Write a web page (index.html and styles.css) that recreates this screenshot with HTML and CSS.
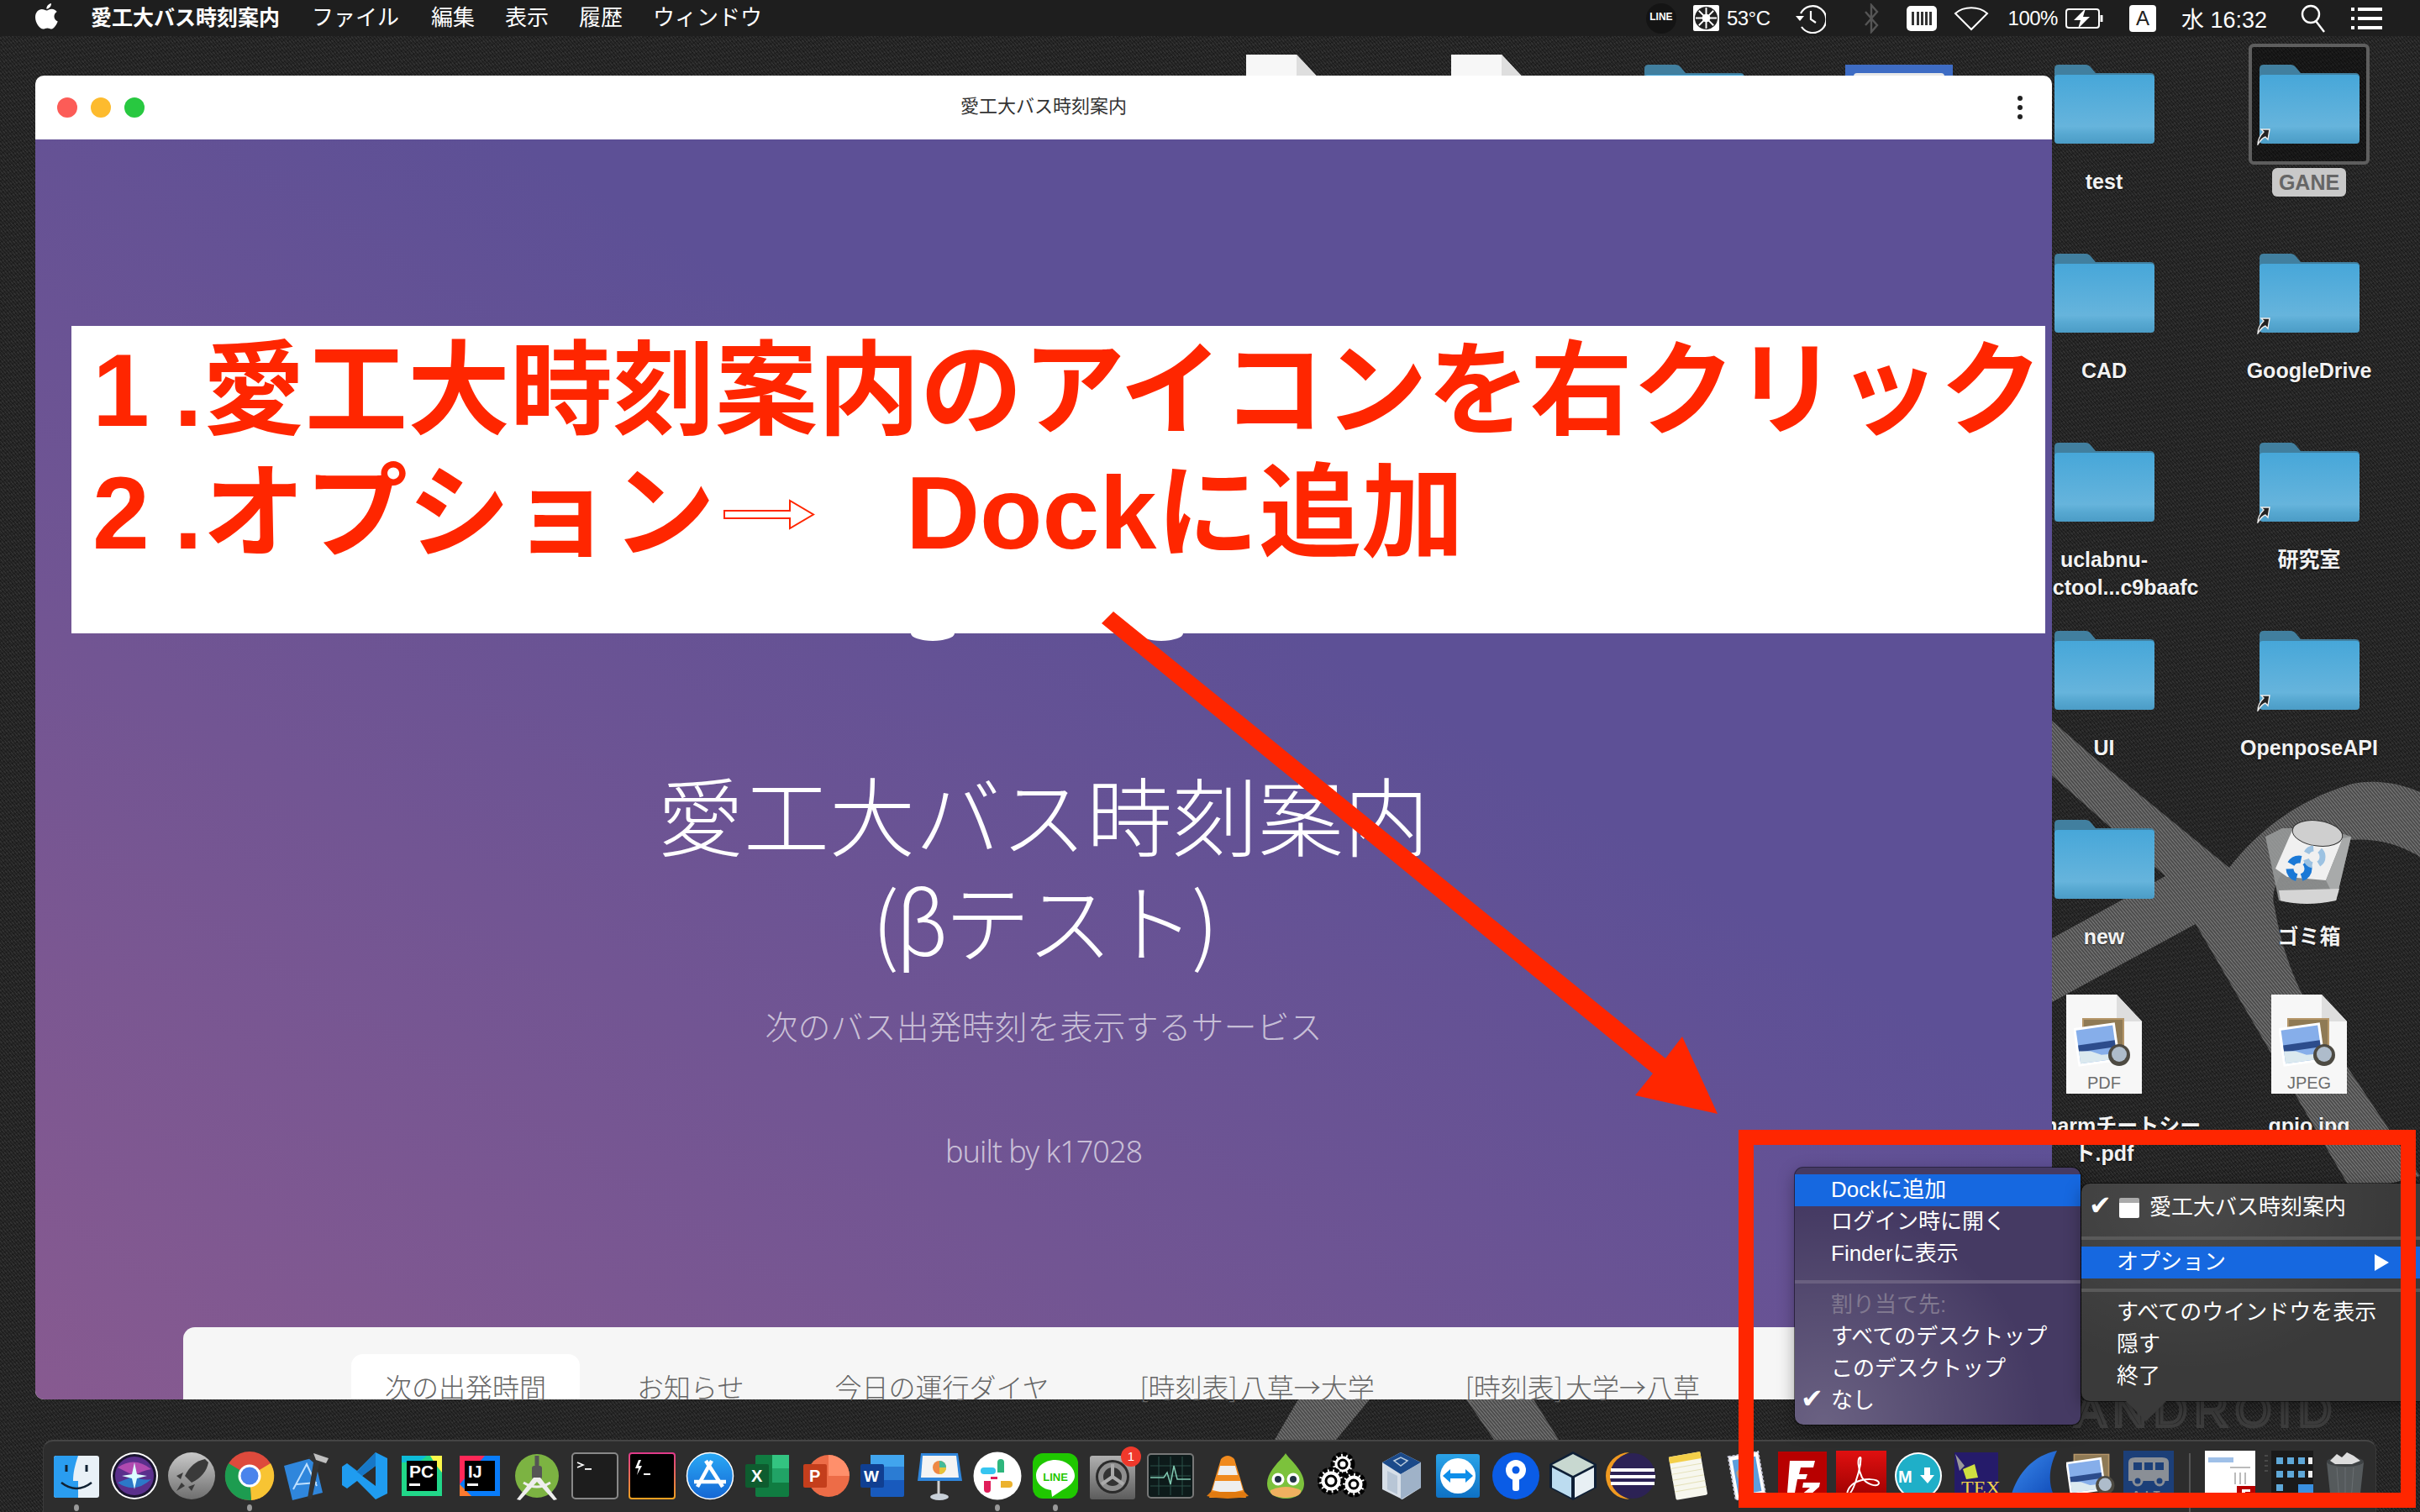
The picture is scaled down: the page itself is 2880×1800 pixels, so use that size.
FILE: index.html
```html
<!DOCTYPE html>
<html lang="ja">
<head>
  <meta charset="UTF-8" />
  <title>愛工大バス時刻案内</title>
  <link rel="stylesheet" href="styles.css">
</head>
<body>

  <!-- shared desktop icons -->
  <svg class="defs" width="0" height="0">
    <defs>
      <pattern id="weave" width="3" height="3" patternUnits="userSpaceOnUse" patternTransform="rotate(50)">
        <rect width="3" height="3" fill="#4c4c4c"/>
        <rect width="3" height="1" fill="#7c7c7c"/>
      </pattern>
      <linearGradient id="folderFace" x1="0" y1="0" x2="0" y2="1">
        <stop offset="0" stop-color="#47a7d9"/>
        <stop offset=".75" stop-color="#66b4dc"/>
        <stop offset=".85" stop-color="#58a9d2"/>
        <stop offset="1" stop-color="#4b9cc6"/>
      </linearGradient>
      <symbol id="folder" viewBox="0 0 119 94">
        <path d="M0 5q0-5 5-5h32q4 0 7 4l5 6h65q5 0 5 5v30H0z" fill="#417f9f"/>
        <rect y="12" width="119" height="82" rx="4" fill="url(#folderFace)"/>
      </symbol>
      <symbol id="alias" viewBox="0 0 16 20">
        <path d="M15 1H5l3 3C4 8 1 12 1 19c3-5 6-8 9-9l3 3z" fill="#222" stroke="#eee" stroke-width="1.4"/>
      </symbol>
      <symbol id="photo" viewBox="0 0 70 62">
        <rect x="10" y="0" width="50" height="44" fill="#b59669"/>
        <rect x="12" y="2" width="46" height="40" fill="#8f7a55"/>
        <g transform="rotate(-8 30 30)">
          <rect x="2" y="8" width="50" height="46" fill="#fff"/>
          <rect x="5" y="11" width="44" height="40" fill="#86aeea"/>
          <path d="M5 29h44v8H5z" fill="#2c4c8c"/>
          <path d="M5 36l14 2 12 6 18 1v6H5z" fill="#dbe9ef"/>
        </g>
        <circle cx="54" cy="44" r="13" fill="#4d4a42"/>
        <circle cx="54" cy="43" r="9" fill="#aebccb"/>
      </symbol>
      <symbol id="fileDoc" viewBox="0 0 90 118">
        <path d="M0 0h60l30 32v86H0z" fill="#f7f7f7"/>
        <path d="M60 0l30 32H60z" fill="#dedede"/>
      </symbol>
    </defs>
  </svg>

  <!-- wallpaper -->
  <svg class="wallpaper" viewBox="0 0 2880 1800">
    <path fill="url(#weave)" d="M2442 858 L2490 900 L2653 1033 C2690 985 2740 950 2800 933 C2830 927 2860 934 2880 943 L2880 1020 C2845 998 2800 992 2750 1010 C2715 1030 2700 1060 2707 1080 C2715 1130 2733 1177 2760 1220 L2880 1400 L2800 1420 L2613 1100 L2442 1193 L2442 1117 L2577 1043 L2442 923 Z"/>
    <path fill="url(#weave)" d="M1545 1666H1630L1590 1714H1517Z M1745 1666H1825L1855 1714H1778Z"/>
  </svg>
  <div class="wall-logo">ANDROID</div>

  <!-- menu bar -->
  <header class="menubar">
    <svg class="apple" viewBox="0 0 28 34"><path fill="#fff" d="M20 1c.3 3-2.300 6.600-5.600 6.800C14 4.500 17 1.400 20 1zM14.700 9.500c1.300 0 3-1.700 6-1.700 2.400 0 4.800 1.300 6 3.300-4.800 3-4 9.300 1 11.500-1.300 3.600-4.500 9-7.300 9-1.700 0-2.800-1.200-5-1.200s-3.300 1.200-5 1.200C6 31.600 1 24 1 17.500 1 11.600 4.800 8 8.700 8c2.600 0 4.700 1.500 6 1.500z"/></svg>
    <span class="menu-item menu-item--app">愛工大バス時刻案内</span>
    <span class="menu-item menu-item--file">ファイル</span>
    <span class="menu-item">編集</span>
    <span class="menu-item">表示</span>
    <span class="menu-item">履歴</span>
    <span class="menu-item">ウィンドウ</span>

    <div class="status">
      <span class="st-line">LINE</span>
      <svg class="st-fan" viewBox="0 0 32 32"><rect width="32" height="32" rx="2" fill="#fff"/><circle cx="16" cy="16" r="14" fill="#222"/><g stroke="#fff" stroke-width="2"><path d="M16 3v26M3 16h26M7 7l18 18M25 7L7 25"/></g><circle cx="16" cy="16" r="5" fill="#fff"/></svg>
      <span class="st-text st-temp">53°C</span>
      <svg class="st-clock" viewBox="0 0 36 36" fill="none" stroke="#fff" stroke-width="2.200"><path d="M6 12A16 16 0 1 1 7 28"/><path d="M18 9v10l6 4"/><path d="M0 15h10l-5 6z" fill="#fff" stroke="none"/></svg>
      <svg class="st-bt" viewBox="0 0 20 36" fill="none" stroke="#555" stroke-width="2.400"><path d="M3 10l14 16-7 8V2l7 8L3 26"/></svg>
      <svg class="st-mem" viewBox="0 0 36 30"><rect width="36" height="30" rx="5" fill="#fff"/><path fill="#333" d="M6 7h3v16H6zM12 7h3v16h-3zM17 7h3v16h-3zM22 7h3v16h-3zM27 7h3v16h-3z"/></svg>
      <svg class="st-wifi" viewBox="0 0 42 30" fill="none" stroke="#fff" stroke-width="2"><path d="M21 28L2 9c10-9 28-9 38 0z"/></svg>
      <span class="st-text st-pct">100%</span>
      <svg class="st-batt" viewBox="0 0 46 26" fill="none" stroke="#fff" stroke-width="2"><rect x="1" y="2" width="39" height="22" rx="3"/><path d="M43 9v8" stroke-width="3"/><path fill="#fff" stroke="none" d="M24 1L10 15h8l-3 10 14-14h-8z"/></svg>
      <span class="st-input">A</span>
      <span class="st-text st-time">水 16:32</span>
      <svg class="st-search" viewBox="0 0 30 34" fill="none" stroke="#fff" stroke-width="2.400"><circle cx="12" cy="12" r="10"/><path d="M18 20l10 13"/></svg>
      <svg class="st-list" viewBox="0 0 37 26" fill="#fff"><path d="M0 0h4v4H0zM8 0h29v4H8zM0 11h4v4H0zM8 11h29v4H8zM0 22h4v4H0zM8 22h29v4H8z"/></svg>
    </div>
  </header>

  <!-- desktop icons -->
  <section class="desk-grid">
    <div class="desk-item"><div class="desk-icon"><svg class="file-icon"><use href="#fileDoc"/></svg></div></div>
    <div class="desk-item"><div class="desk-icon"><svg class="file-icon"><use href="#fileDoc"/></svg></div></div>
    <div class="desk-item"><div class="desk-icon"><svg class="folder-icon"><use href="#folder"/></svg></div></div>
    <div class="desk-item"><div class="desk-icon"><div class="doc-blue"><span></span></div></div></div>
    <div class="desk-item"><div class="desk-icon"><svg class="folder-icon"><use href="#folder"/></svg></div><div class="desk-label">test</div></div>
    <div class="desk-item"><div class="desk-icon desk-icon--sel"><svg class="folder-icon"><use href="#folder"/></svg><svg class="alias-mark"><use href="#alias"/></svg></div><div class="desk-label desk-label--sel">GANE</div></div>

    <div class="desk-item col5"><div class="desk-icon"><svg class="folder-icon"><use href="#folder"/></svg></div><div class="desk-label">CAD</div></div>
    <div class="desk-item"><div class="desk-icon"><svg class="folder-icon"><use href="#folder"/></svg><svg class="alias-mark"><use href="#alias"/></svg></div><div class="desk-label">GoogleDrive</div></div>

    <div class="desk-item col5"><div class="desk-icon"><svg class="folder-icon"><use href="#folder"/></svg></div><div class="desk-label">uclabnu-<br>mcuctool...c9baafc</div></div>
    <div class="desk-item"><div class="desk-icon"><svg class="folder-icon"><use href="#folder"/></svg><svg class="alias-mark"><use href="#alias"/></svg></div><div class="desk-label">研究室</div></div>

    <div class="desk-item col5"><div class="desk-icon"><svg class="folder-icon"><use href="#folder"/></svg></div><div class="desk-label">UI</div></div>
    <div class="desk-item"><div class="desk-icon"><svg class="folder-icon"><use href="#folder"/></svg><svg class="alias-mark"><use href="#alias"/></svg></div><div class="desk-label">OpenposeAPI</div></div>

    <div class="desk-item col5"><div class="desk-icon"><svg class="folder-icon"><use href="#folder"/></svg></div><div class="desk-label">new</div></div>
    <div class="desk-item"><div class="desk-icon">
      <svg class="trash-icon" viewBox="0 0 104 106">
        <path d="M0 24l16 76q20 6 68 0l18-76-30-10H20z" fill="#9a9c9c" opacity=".85"/>
        <path d="M34 12l58 14-20 50-46-4-14-10z" fill="#f0f0f0"/>
        <path d="M72 76l20-50 10-2-18 76z" fill="#a8aaaa"/>
        <ellipse cx="62" cy="20" rx="30" ry="15" transform="rotate(8 62 20)" fill="#cfcfcf" stroke="#333"/>
        <path d="M16 88l72-2-4 14q-36 8-66 0z" fill="#d5d5d5"/>
        <circle cx="40" cy="62" r="11" fill="none" stroke="#1a78d6" stroke-width="9" stroke-dasharray="14 6"/>
        <circle cx="58" cy="48" r="10" fill="none" stroke="#9cc2e2" stroke-width="7" stroke-dasharray="10 8"/>
      </svg>
    </div><div class="desk-label">ゴミ箱</div></div>

    <div class="desk-item col5"><div class="desk-icon desk-icon--file"><svg class="file-icon"><use href="#fileDoc"/></svg><svg class="file-photo"><use href="#photo"/></svg><span class="file-kind">PDF</span></div><div class="desk-label">Pycharmチートシー<br>ト.pdf</div></div>
    <div class="desk-item"><div class="desk-icon desk-icon--file"><svg class="file-icon"><use href="#fileDoc"/></svg><svg class="file-photo"><use href="#photo"/></svg><span class="file-kind">JPEG</span></div><div class="desk-label">gpio.jpg</div></div>
  </section>

  <!-- browser window -->
  <main class="window">
    <div class="titlebar">
      <div class="lights"><i class="light light--red"></i><i class="light light--yellow"></i><i class="light light--green"></i></div>
      <div class="win-title">愛工大バス時刻案内</div>
      <div class="win-more"><i></i><i></i><i></i></div>
    </div>
    <div class="page">
      <div class="hero">
        <h1 class="hero-title">愛工大バス時刻案内<br><span class="hero-beta">(βテスト)</span></h1>
        <p class="hero-sub">次のバス出発時刻を表示するサービス</p>
        <p class="hero-by">built by k17028</p>
      </div>
      <nav class="tabs">
        <span class="tab tab--active">次の出発時間</span>
        <span class="tab">お知らせ</span>
        <span class="tab">今日の運行ダイヤ</span>
        <span class="tab">[時刻表] 八草→大学</span>
        <span class="tab">[時刻表] 大学→八草</span>
      </nav>
    </div>
  </main>

  <!-- bumps of the buttons hidden under the note -->
  <i class="peek peek--a"></i>
  <i class="peek peek--b"></i>

  <!-- annotation -->
  <div class="note">
    <div class="note-line"><span class="note-num">1</span>.愛工大時刻案内のアイコンを右クリック</div>
    <div class="note-line"><span class="note-num">2</span>.オプション<svg class="note-arrow" viewBox="0 0 109 37"><path d="M1 14h78V2l28 16.500L79 35V23H1z" fill="#fff" stroke="#ff2600" stroke-width="2"/></svg>Dockに追加</div>
  </div>

  <svg class="red-arrow" viewBox="0 0 2880 1800"><path fill="#ff2600" d="M1311 742L1325 728L1982 1260L2002 1234L2044 1326L1946 1304L1967 1278Z"/></svg>

  <!-- dock -->
  <footer class="dock">
    <div class="dock-item has-dot"><svg viewBox="0 0 60 60"><rect x="3" y="6" width="54" height="50" rx="3" fill="#e9f1f7"/><path d="M6 6h26c-4 12-6 20-6 30h6v20H6q-3 0-3-3V9q0-3 3-3z" fill="#2a9df0"/><path d="M18 17v8M42 17v8" stroke="#123" stroke-width="3"/><path d="M12 38q18 14 36 0" fill="none" stroke="#123" stroke-width="2.500"/></svg></div>
    <div class="dock-item"><svg viewBox="0 0 60 60"><circle cx="30" cy="30" r="28" fill="#fff"/><circle cx="30" cy="30" r="26" fill="#1a1430"/><circle cx="30" cy="30" r="23" fill="#5a2f8c"/><path d="M10 20q20-14 40 2-12 2-20 8z" fill="#b04ab0"/><path d="M10 38q20 14 40-4-12 2-20-4z" fill="#2c78c8"/><path d="M30 14l3 14 12 2-12 3-3 13-3-13-12-3 12-2z" fill="#dff"/></svg></div>
    <div class="dock-item"><svg viewBox="0 0 60 60"><defs><linearGradient id="lp" x1="0" y1="0" x2="0" y2="1"><stop offset="0" stop-color="#c9c9c9"/><stop offset="1" stop-color="#6e6e6e"/></linearGradient></defs><circle cx="30" cy="30" r="28" fill="url(#lp)"/><path d="M46 10c-10 2-18 8-24 20l8 8c12-6 18-14 20-24z" fill="#3a3a3a"/><path d="M20 26l-8 4 5 4zM34 40l-4 8-4-5zM18 38l-6 10 10-6z" fill="#3a3a3a"/></svg></div>
    <div class="dock-item has-dot"><svg viewBox="0 0 60 60"><circle cx="30" cy="30" r="29" fill="#de4a3c"/><path d="M30 30L55 15A29 29 0 0 1 32 59z" fill="#f8c433"/><path d="M30 30L32 59A29 29 0 0 1 5 15z" fill="#1d9c50"/><circle cx="30" cy="30" r="13.500" fill="#fff"/><circle cx="30" cy="30" r="10.500" fill="#4a84ec"/></svg></div>
    <div class="dock-item"><svg viewBox="0 0 60 60"><path d="M3 18l36-10 10 42-36 9z" fill="#2f86dc"/><path d="M14 46L30 16l12 26M18 40l24-2" fill="none" stroke="#bfe0ff" stroke-width="2"/><path d="M41 2l16 8-4 5-8 0-9 43-5-1 7-43-7-6z" fill="#333"/><path d="M38 3l18 6-3 6-12-4z" fill="#c0c0c0"/></svg></div>
    <div class="dock-item"><svg viewBox="0 0 60 60"><path d="M43 2l14 7v42l-14 7-22-22-12 9-6-4v-22l6-4 12 9zM43 18L27 30l16 12z" fill="#1f9cf0"/><path d="M43 2v16L27 30 9 16l12 9z" fill="#1777c6"/></svg></div>
    <div class="dock-item"><svg viewBox="0 0 60 60"><rect x="6" y="6" width="48" height="48" fill="#21d789"/><path d="M6 6h30l-10 8H6z" fill="#0dbbd8"/><path d="M40 6h14v20l-8-10z" fill="#fcf84a"/><rect x="12" y="12" width="36" height="36" fill="#000"/><text x="15" y="32" class="ico-txt" font-size="21" fill="#fff">PC</text><rect x="15" y="39" width="13" height="3" fill="#fff"/></svg></div>
    <div class="dock-item"><svg viewBox="0 0 60 60"><rect x="6" y="6" width="48" height="48" fill="#087cfa"/><path d="M6 6h30L6 40z" fill="#fe2857"/><path d="M6 40l14 14H6z" fill="#fe7a2f"/><rect x="12" y="12" width="36" height="36" fill="#000"/><text x="16" y="32" class="ico-txt" font-size="20" fill="#fff">IJ</text><rect x="15" y="39" width="13" height="3" fill="#fff"/></svg></div>
    <div class="dock-item"><svg viewBox="0 0 60 60"><circle cx="30" cy="30" r="26" fill="#7cb342"/><path d="M30 6v14" stroke="#555" stroke-width="5"/><rect x="24" y="18" width="12" height="16" rx="3" fill="#555"/><path d="M26 32L6 58l4 1 20-22 20 22 4-1-20-26z" fill="#eee"/><path d="M14 38q16 10 32 0" fill="none" stroke="#eee" stroke-width="3"/></svg></div>
    <div class="dock-item"><svg viewBox="0 0 60 60"><rect x="3" y="3" width="54" height="54" rx="4" fill="#1d1d1d" stroke="#888" stroke-width="2"/><path d="M9 14l7 3-7 3" fill="none" stroke="#fff" stroke-width="1.600"/><rect x="18" y="21" width="8" height="1.800" fill="#fff"/></svg></div>
    <div class="dock-item"><svg viewBox="0 0 60 60"><defs><linearGradient id="it" x1="0" y1="0" x2="0" y2="1"><stop offset="0" stop-color="#e03a8a"/><stop offset="1" stop-color="#f0a020"/></linearGradient></defs><rect x="3" y="3" width="54" height="54" rx="3" fill="#000" stroke="url(#it)" stroke-width="2"/><path d="M14 11l-4 10h4l-2 8 6-11h-4l3-7z" fill="#fff"/><rect x="20" y="27" width="8" height="2" fill="#fff"/></svg></div>
    <div class="dock-item"><svg viewBox="0 0 60 60"><defs><linearGradient id="as" x1="0" y1="0" x2="0" y2="1"><stop offset="0" stop-color="#2aa9f5"/><stop offset="1" stop-color="#1466d4"/></linearGradient></defs><circle cx="30" cy="30" r="27.500" fill="url(#as)" stroke="#fff" stroke-width="1.500"/><path d="M32 12L15 43M25 12l20 31M11 37h38" stroke="#fff" stroke-width="4.500" fill="none"/></svg></div>
    <div class="dock-item"><svg viewBox="0 0 60 60"><rect x="16" y="5" width="40" height="50" rx="2" fill="#107c41"/><rect x="36" y="5" width="20" height="16" fill="#33c481"/><rect x="36" y="21" width="20" height="17" fill="#21a366"/><rect x="4" y="16" width="28" height="28" rx="2" fill="#0e5c2f"/><text x="11" y="37" class="ico-txt" font-size="20" fill="#fff">X</text></svg></div>
    <div class="dock-item"><svg viewBox="0 0 60 60"><circle cx="34" cy="30" r="25" fill="#ed6c47"/><path d="M34 5a25 25 0 0 1 25 25H34z" fill="#ff8f6b"/><rect x="4" y="16" width="28" height="28" rx="2" fill="#c43e1c"/><text x="11" y="37" class="ico-txt" font-size="20" fill="#fff">P</text></svg></div>
    <div class="dock-item"><svg viewBox="0 0 60 60"><rect x="16" y="5" width="40" height="50" rx="2" fill="#185abd"/><rect x="16" y="5" width="40" height="14" fill="#41a5ee"/><rect x="16" y="19" width="40" height="16" fill="#2b7cd3"/><rect x="4" y="16" width="28" height="28" rx="2" fill="#103f91"/><text x="8" y="37" class="ico-txt" font-size="19" fill="#fff">W</text></svg></div>
    <div class="dock-item"><svg viewBox="0 0 60 60"><path d="M28 34v20" stroke="#d0d0d0" stroke-width="3"/><ellipse cx="29" cy="55" rx="11" ry="4" fill="#c8d0d8"/><path d="M3 36L7 3h44l5 33z" fill="#2f86dc"/><path d="M9 6h40l3 26H7z" fill="#f4f4f4"/><circle cx="29" cy="20" r="8" fill="#e84"/><path d="M29 20V12a8 8 0 0 1 8 8z" fill="#4b9"/><path d="M29 20h8a8 8 0 0 1-8 8z" fill="#e5c43a"/></svg></div>
    <div class="dock-item has-dot"><svg viewBox="0 0 60 60"><circle cx="30" cy="30" r="28.500" fill="#fff"/><path d="M14 28h10a3 3 0 0 0 0-8H14a4 4 0 0 0 0 8z" fill="#36c5f0"/><path d="M22 36v10a4 4 0 0 1-8 0V36z" fill="#e01e5a"/><path d="M30 14a4 4 0 0 1 8 0v12h-8z" fill="#2eb67d"/><path d="M34 44h10a4 4 0 0 0 0-8H34z" fill="#ecb22e"/><path d="M30 34h-8v-3h8z" fill="#e01e5a"/></svg></div>
    <div class="dock-item has-dot"><svg viewBox="0 0 60 60"><rect x="3" y="3" width="54" height="54" rx="12" fill="#1fc700"/><path d="M30 11C16 11 7 20 7 30c0 9 8 16 18 17l1 8 12-8c8-4 15-10 15-17 0-10-10-19-23-19z" fill="#fff"/><text x="30" y="36" text-anchor="middle" class="ico-txt" font-size="13" fill="#1fc700">LINE</text></svg></div>
    <div class="dock-item"><svg viewBox="0 0 60 60"><defs><linearGradient id="sp" x1="0" y1="0" x2="0" y2="1"><stop offset="0" stop-color="#b0b0b0"/><stop offset="1" stop-color="#5c5c5c"/></linearGradient></defs><rect x="3" y="6" width="54" height="52" rx="3" fill="url(#sp)"/><circle cx="30" cy="31" r="20" fill="#2b2b2b"/><circle cx="30" cy="31" r="17" fill="#8e8e8e"/><circle cx="30" cy="31" r="11" fill="#333"/><path d="M30 31V16M30 31l13 9M30 31l-13 9" stroke="#aaa" stroke-width="4"/></svg><span class="badge">1</span></div>
    <div class="dock-item"><svg viewBox="0 0 60 60"><rect x="3" y="4" width="54" height="52" rx="4" fill="#0d1a1a" stroke="#777" stroke-width="2"/><path d="M6 18h48M6 30h48M6 42h48M16 7v46M30 7v46M44 7v46" stroke="#2a5048" stroke-width="1"/><path d="M6 32h16l4-6 4 14 4-22 4 16h16" fill="none" stroke="#7fc8b0" stroke-width="1.500"/></svg></div>
    <div class="dock-item"><svg viewBox="0 0 60 60"><path d="M22 10q8-8 16 0l14 46H8z" fill="#f08a1e"/><path d="M21 18h18l3 11H18zM15 36h30l3 11q-18 5-36 0z" fill="#eee"/><path d="M5 54l5-5 40 0 5 5q-25 6-50 0z" fill="#e07a10"/></svg></div>
    <div class="dock-item"><svg viewBox="0 0 60 60"><path d="M30 3c-3 6-22 20-22 36 0 12 10 18 22 18s22-6 22-18C52 23 33 9 30 3z" fill="#7cc23c"/><circle cx="21" cy="34" r="7.500" fill="#fff"/><circle cx="39" cy="34" r="7.500" fill="#fff"/><circle cx="21" cy="34" r="4" fill="#234"/><circle cx="39" cy="34" r="4" fill="#234"/><path d="M12 47q18-8 36 0 2 8-18 9-20-1-18-9z" fill="#f0b060"/></svg></div>
    <div class="dock-item"><svg viewBox="0 0 60 60"><g fill="#fff" stroke="#000" stroke-width="5"><circle cx="30" cy="16" r="12" stroke-dasharray="5 2"/><circle cx="16" cy="36" r="14" stroke-dasharray="5 2"/><circle cx="43" cy="40" r="13" stroke-dasharray="5 2"/></g><g fill="none" stroke="#000" stroke-width="3"><circle cx="30" cy="16" r="5"/><circle cx="16" cy="36" r="6"/><circle cx="43" cy="40" r="5"/></g></svg></div>
    <div class="dock-item"><svg viewBox="0 0 60 60"><path d="M30 2l24 12v30L32 58 8 46V14z" fill="#d7dfe8"/><path d="M30 2l24 12-24 14L8 14z" fill="#1b4a8a"/><path d="M30 28v30l24-14V14z" fill="#9fb2c8"/><path d="M22 12l8-4 8 4-8 6z" fill="none" stroke="#bcd" stroke-width="1.500"/><path d="M14 24l12 6v22l-12-6z" fill="#b8c6d6"/></svg></div>
    <div class="dock-item"><svg viewBox="0 0 60 60"><defs><linearGradient id="tv" x1="0" y1="0" x2="0" y2="1"><stop offset="0" stop-color="#2aa3e8"/><stop offset="1" stop-color="#0e71c4"/></linearGradient></defs><rect x="4" y="4" width="52" height="52" rx="3" fill="url(#tv)"/><circle cx="30" cy="30" r="21" fill="#fff"/><path d="M12 30l9-8v5h18v-5l9 8-9 8v-5H21v5z" fill="#0e8ee9"/></svg></div>
    <div class="dock-item"><svg viewBox="0 0 60 60"><circle cx="30" cy="30" r="28" fill="#0a5ce6"/><circle cx="30" cy="23" r="12" fill="#fff"/><circle cx="30" cy="23" r="4.500" fill="#0a5ce6"/><rect x="26" y="28" width="8" height="20" rx="3" fill="#fff"/></svg></div>
    <div class="dock-item"><svg viewBox="0 0 60 60"><path d="M30 1l28 15v28L30 59 2 44V16z" fill="#0e1f36"/><path d="M30 4l25 13-25 13L5 17z" fill="#c8d8d0"/><path d="M5 20l23 12v24L5 44z" fill="#bcdcf0"/><path d="M32 32l23-12v24L32 56z" fill="#e8f0f4"/></svg></div>
    <div class="dock-item"><svg viewBox="0 0 60 60"><path d="M28 2a28 28 0 0 0 0 56A30 30 0 0 1 28 2z" fill="#f09a20"/><circle cx="32" cy="30" r="27" fill="#2c2255"/><path d="M6 21h52v4H6zM5 29h54v4H5zM6 37h52v4H6z" fill="#fff"/></svg></div>
    <div class="dock-item"><svg viewBox="0 0 60 60"><g transform="rotate(-10 30 30)"><rect x="11" y="4" width="38" height="52" rx="2" fill="#f7f7ee"/><rect x="11" y="4" width="38" height="8" fill="#f3cf49"/><path d="M11 18h38M11 25h38M11 32h38M11 39h38M11 46h38" stroke="#e4e0b8" stroke-width="1"/></g></svg></div>
    <div class="dock-item"><svg viewBox="0 0 60 60"><g transform="rotate(-10 30 30)"><rect x="13" y="4" width="36" height="52" fill="#fff" stroke="#ccd" stroke-width="2" stroke-dasharray="3 2"/><rect x="17" y="9" width="28" height="42" fill="#5d9edc"/><path d="M19 24q12-12 20 6-4 14-12 8-8-2-8-14z" fill="#b89a80"/></g></svg></div>
    <div class="dock-item"><svg viewBox="0 0 60 60"><rect x="0" y="1" width="58" height="58" fill="#b80000"/><path d="M14 12h30l-2 8H27l-2 8h10l-2 6H23l-3 16h-9zM30 38h20l-1 5-10 9h10l-1 6H26l1-5 11-9h-9z" fill="#fff"/></svg></div>
    <div class="dock-item"><svg viewBox="0 0 60 60"><defs><linearGradient id="ac" x1="0" y1="0" x2="0" y2="1"><stop offset="0" stop-color="#e01010"/><stop offset="1" stop-color="#980000"/></linearGradient></defs><rect width="60" height="60" fill="url(#ac)"/><path d="M29 8c-4 0-3 14 2 24 5 8 18 12 20 7 1-6-18-7-30 0-8 6-9 14-6 13 5-2 12-24 14-36 0-4 1-8 0-8z" fill="none" stroke="#fff" stroke-width="2"/></svg></div>
    <div class="dock-item"><svg viewBox="0 0 60 60"><circle cx="30" cy="30" r="28" fill="#fff"/><circle cx="30" cy="30" r="26" fill="#1fafc8"/><text x="6" y="38" class="ico-txt" font-size="20" fill="#fff">M</text><path d="M37 20h7v9h5l-8 10-9-10h5z" fill="#fff"/></svg></div>
    <div class="dock-item"><svg viewBox="0 0 60 60"><rect x="4" y="2" width="52" height="56" fill="#251b6a"/><path d="M5 4l5 20 6-6z" fill="#999"/><path d="M14 22l14-6 4 16-14 2z" fill="#cfe040"/><text x="12" y="52" class="ico-serif" font-size="24" fill="#efd24a">TEX</text></svg></div>
    <div class="dock-item"><svg viewBox="0 0 60 60"><defs><linearGradient id="fin" x1="0" y1="0" x2="1" y2="1"><stop offset="0" stop-color="#3c8cf0"/><stop offset="1" stop-color="#0d47b4"/></linearGradient></defs><path d="M58 0C28 6 8 30 2 60h56C46 42 48 20 58 0z" fill="url(#fin)"/></svg></div>
    <div class="dock-item"><svg viewBox="0 0 70 62"><use href="#photo"/></svg></div>
    <div class="dock-item"><svg viewBox="0 0 60 60"><rect width="60" height="60" fill="#1c3f78"/><path d="M6 14q0-6 8-6h32q8 0 8 6v22H6z" fill="#8a8f96"/><path d="M12 14h10v9H12zM25 14h10v9H25zM38 14h10v9H38z" fill="#1c3f78"/><circle cx="17" cy="36" r="5" fill="#1c3f78" stroke="#8a8f96" stroke-width="3"/><circle cx="43" cy="36" r="5" fill="#1c3f78" stroke="#8a8f96" stroke-width="3"/><text x="30" y="57" text-anchor="middle" class="ico-txt ico-txt--wide" font-size="13" fill="#8a8f96">AIT</text></svg></div>
    <i class="dock-sep"></i>
    <div class="dock-item"><svg viewBox="0 0 60 60"><rect width="60" height="60" fill="#fff"/><rect x="4" y="8" width="30" height="6" fill="#9fc0e8"/><path d="M30 20h24M36 26v14M42 26v14M48 26v14" stroke="#bbb" stroke-width="2"/><rect x="38" y="42" width="22" height="18" fill="#b80000"/><path d="M44 46h10v3h-6v3h5v2h-5v5h-4z" fill="#fff"/></svg></div>
    <div class="dock-item"><svg viewBox="0 0 60 60"><rect x="10" width="50" height="60" fill="#1a1a1a"/><g fill="#5fa8d8"><rect x="16" y="8" width="8" height="8"/><rect x="29" y="8" width="8" height="8"/><rect x="42" y="8" width="8" height="8"/><rect x="16" y="24" width="8" height="8"/><rect x="29" y="24" width="8" height="8"/><rect x="42" y="24" width="8" height="8"/><rect x="16" y="40" width="8" height="8"/></g><g fill="#eee"><rect x="54" y="8" width="5" height="8"/><rect x="54" y="24" width="5" height="8"/></g><rect x="42" y="40" width="18" height="20" fill="#3a90e0"/><path d="M2 6h4M2 12h4M2 18h4M2 24h4" stroke="#666"/></svg></div>
    <div class="dock-item"><svg viewBox="0 0 60 60"><path d="M8 14h44l-5 46H13z" fill="#555a5c"/><ellipse cx="30" cy="13" rx="22" ry="6" fill="#3e4244"/><path d="M12 12l8-8 6 4 6-6 8 4 8 6-10 4H18z" fill="#ddd"/><path d="M20 20l3 40M30 20v40M40 20l-3 40" stroke="#6a6f72"/></svg></div>
  </footer>

  <!-- right click menus -->
  <div class="ctx ctx--left">
    <div class="ctx-row ctx-row--on">Dockに追加</div>
    <div class="ctx-row">ログイン時に開く</div>
    <div class="ctx-row">Finderに表示</div>
    <hr class="ctx-sep ctx-sep--left">
    <div class="ctx-row ctx-row--off">割り当て先:</div>
    <div class="ctx-row">すべてのデスクトップ</div>
    <div class="ctx-row">このデスクトップ</div>
    <div class="ctx-row"><span class="check">✔</span>なし</div>
  </div>

  <div class="ctx ctx--right">
    <div class="ctx-row ctx-row--win"><span class="check check--win">✔</span><i class="mini-win"></i>愛工大バス時刻案内</div>
    <hr class="ctx-sep ctx-sep--one">
    <div class="ctx-row ctx-row--on">オプション<span class="ctx-more"></span></div>
    <hr class="ctx-sep ctx-sep--two">
    <div class="ctx-row">すべてのウインドウを表示</div>
    <div class="ctx-row">隠す</div>
    <div class="ctx-row">終了</div>
  </div>
  <i class="ctx-tail"></i>

  <div class="red-frame"></div>

</body>
</html>
```

FILE: styles.css
```css
* {
  box-sizing: border-box;
}
html, body {
  margin: 0;
  width: 2880px;
  height: 1800px;
  overflow: hidden;
}
body {
  position: relative;
  font-family: "Liberation Sans", "Noto Sans CJK JP", sans-serif;
  color: #fff;
  background-color: #232323;
  background-image:
    repeating-linear-gradient(50deg, rgba(255,255,255,0.07) 0 1px, transparent 1px 3px),
    repeating-linear-gradient(-40deg, rgba(0,0,0,0.22) 0 1px, transparent 1px 4px);
}
.defs {
  position: absolute;
}

.wallpaper {
  position: absolute;
  left: 0;
  top: 0;
  width: 2880px;
  height: 1800px;
}
.wall-logo {
  position: absolute;
  left: 2469px;
  top: 1651px;
  font-size: 56px;
  line-height: 56px;
  letter-spacing: 8px;
  color: #262626;
  -webkit-text-stroke: 4px #3c3c3c;
}

/* menu bar */
.menubar {
  position: relative;
  display: flex;
  align-items: center;
  height: 43px;
  padding-left: 41px;
  background: #1e1e1e;
  font-size: 26px;
}
.apple {
  width: 28px;
  height: 34px;
  margin-right: 39px;
  margin-top: -4px;
}
.menu-item {
  margin-right: 36px;
  line-height: 43px;
}
.menu-item--app {
  margin-right: 38px;
  font-weight: 700;
  font-size: 25px;
}
.menu-item--file {
  margin-right: 38px;
}
.status {
  margin-left: auto;
  display: flex;
  align-items: center;
  padding-right: 45px;
}
.st-text {
  font-size: 24px;
  letter-spacing: -0.5px;
  white-space: nowrap;
}
.st-line {
  width: 36px;
  text-align: center;
  font-size: 12px;
  font-weight: 700;
  height: 36px;
  line-height: 32px;
  border-radius: 18px;
  background: #141414;
}
.st-fan { width: 31px; height: 31px; margin-left: 20px; }
.st-temp { margin-left: 9px; }
.st-clock { width: 36px; height: 36px; margin-left: 30px; }
.st-bt { width: 20px; height: 36px; margin-left: 44px; }
.st-mem { width: 36px; height: 30px; margin-left: 32px; }
.st-wifi { width: 42px; height: 30px; margin-left: 20px; }
.st-pct { margin-left: 23px; }
.st-batt { width: 46px; height: 26px; margin-left: 9px; }
.st-input {
  width: 32px;
  height: 32px;
  margin-left: 30px;
  border-radius: 4px;
  background: #fff;
  color: #222;
  font-size: 24px;
  line-height: 32px;
  text-align: center;
}
.st-time {
  margin-left: 30px;
  font-size: 27px;
  letter-spacing: 0;
}
.st-search { width: 30px; height: 34px; margin-left: 40px; }
.st-list { width: 37px; height: 26px; margin-left: 30px; }

/* desktop icons */
.desk-grid {
  position: absolute;
  left: 1406px;
  top: 62px;
  display: grid;
  grid-template-columns: repeat(6, 244px);
  grid-auto-rows: 224.75px;
}
.col5 {
  grid-column: 5;
}
.desk-item {
  display: flex;
  flex-direction: column;
  align-items: center;
}
.desk-icon {
  position: relative;
  width: 144px;
  height: 124px;
  display: flex;
  align-items: center;
  justify-content: center;
}
.desk-icon--sel::before {
  content: "";
  position: absolute;
  left: 0;
  right: 0;
  top: -10px;
  bottom: -10px;
  border: 4px solid #5e5e5e;
  border-radius: 6px;
  background: rgba(0,0,0,0.4);
}
.desk-icon--file {
  align-items: flex-start;
}
.folder-icon {
  position: relative;
  width: 119px;
  height: 94px;
}
.file-icon {
  width: 90px;
  height: 118px;
}
.desk-icon--file .file-icon {
  margin-top: -2px;
}
.doc-blue {
  width: 128px;
  height: 94px;
  padding: 10px 10px 0;
  background: #3e6cc4;
}
.doc-blue span {
  display: block;
  height: 40px;
  background: #e8e8e8;
  border-radius: 4px;
}
.alias-mark {
  position: absolute;
  left: 10px;
  top: 91px;
  width: 16px;
  height: 20px;
}
.trash-icon {
  width: 104px;
  height: 106px;
  margin-top: 4px;
}
.file-photo {
  position: absolute;
  left: 36px;
  top: 26px;
  width: 70px;
  height: 62px;
}
.file-kind {
  position: absolute;
  left: 0;
  right: 0;
  top: 92px;
  text-align: center;
  font-size: 20px;
  color: #6d6d6d;
}
.desk-label {
  position: relative;
  margin-top: 14px;
  padding: 0 8px;
  font-size: 25px;
  font-weight: 700;
  line-height: 33px;
  text-align: center;
  white-space: nowrap;
  color: #f2f2f2;
  text-shadow: 0 1px 2px rgba(0,0,0,0.7);
}
.desk-label--sel {
  background: #c9c9c9;
  color: #666;
  border-radius: 6px;
  text-shadow: none;
  line-height: 34px;
}

/* browser window */
.window {
  position: absolute;
  left: 42px;
  top: 90px;
  width: 2400px;
  height: 1576px;
  display: flex;
  flex-direction: column;
  border-radius: 10px;
  background: #fff;
}
.titlebar {
  display: flex;
  align-items: center;
  height: 76px;
  padding: 0 35px 0 26px;
}
.lights {
  flex: 1;
  display: flex;
  gap: 16px;
  padding-right: 9px;
}
.light {
  width: 24px;
  height: 24px;
  border-radius: 50%;
}
.light--red { background: #fc5c57; }
.light--yellow { background: #fdbb2e; }
.light--green { background: #28c840; }
.win-title {
  font-size: 22px;
  line-height: 30px;
  margin-top: -3px;
  color: #333;
}
.win-more {
  flex: 1;
  display: flex;
  flex-direction: column;
  align-items: flex-end;
  gap: 5px;
}
.win-more i {
  width: 6px;
  height: 6px;
  border-radius: 50%;
  background: #222;
}
.page {
  flex: 1;
  display: flex;
  flex-direction: column;
  border-radius: 0 0 10px 10px;
  background: linear-gradient(to top right, #875a90, #5d5096 62%);
}
.hero {
  flex: 1;
  text-align: center;
}
.hero-title {
  margin: 0;
  padding-top: 739px;
  font-family: "Noto Sans CJK JP", sans-serif;
  font-size: 102px;
  font-weight: 300;
  line-height: 126px;
}
.hero-beta {
  letter-spacing: -4px;
}
.hero-sub {
  margin: 33px 0 0;
  font-family: "Noto Sans CJK JP", sans-serif;
  font-size: 39px;
  font-weight: 300;
  line-height: 60px;
  color: rgba(255,255,255,0.65);
}
.hero-by {
  margin: 91px 0 0;
  font-family: "Noto Sans", sans-serif;
  font-size: 36px;
  font-weight: 300;
  line-height: 60px;
  letter-spacing: -1px;
  color: rgba(255,255,255,0.65);
}
.tabs {
  display: flex;
  gap: 28px;
  height: 86px;
  margin: 0 176px;
  padding: 32px 0 0 200px;
  border-radius: 14px 14px 0 0;
  background: #f6f6f6;
}
.tab {
  height: 54px;
  padding: 24px 40px 0;
  border-radius: 14px 14px 0 0;
  font-size: 32px;
  font-family: "Noto Sans CJK JP", sans-serif;
  font-weight: 300;
  line-height: 28px;
  word-spacing: -4px;
  white-space: nowrap;
  color: #666;
}
.tab--active {
  background: #fff;
}

.peek {
  position: absolute;
  top: 754px;
  width: 52px;
  height: 9px;
  border-radius: 0 0 50% 50% / 0 0 100% 100%;
  background: #fff;
}
.peek--a { left: 1084px; }
.peek--b { left: 1356px; }

/* annotation */
.note {
  position: absolute;
  left: 85px;
  top: 388px;
  width: 2349px;
  height: 366px;
  padding: 4px 0 0 25px;
  background: #fff;
  color: #ff2600;
  font-size: 122px;
  font-weight: 700;
  line-height: 146px;
  white-space: nowrap;
}
.note-num {
  display: inline-block;
  width: 97px;
}
.note-arrow {
  width: 109px;
  height: 37px;
  margin: 0 108px 0 10px;
  vertical-align: 22px;
}
.red-arrow {
  position: absolute;
  left: 0;
  top: 0;
  width: 2880px;
  height: 1800px;
}

/* dock */
.dock {
  position: absolute;
  left: 51px;
  top: 1714px;
  width: 2777px;
  height: 86px;
  display: flex;
  gap: 8.5px;
  padding: 11px 0 0 9px;
  background: #2d2d2d;
  border-top: 2px solid #454545;
  border-left: 1px solid #3a3a3a;
  border-right: 1px solid #3a3a3a;
  border-radius: 12px 12px 0 0;
}
.dock-item {
  position: relative;
  flex: 0 0 60px;
  height: 60px;
}
.dock-item svg {
  display: block;
  width: 60px;
  height: 60px;
}
.has-dot::after {
  content: "";
  position: absolute;
  left: 27px;
  top: 64px;
  width: 6px;
  height: 8px;
  border-radius: 50%;
  background: #999;
}
.dock-sep {
  flex: 0 0 2px;
  height: 76px;
  margin: 3px 9px 0;
  background: #555;
}
.badge {
  position: absolute;
  right: -4px;
  top: -5px;
  width: 24px;
  height: 24px;
  border-radius: 50%;
  background: #f0392b;
  font-size: 15px;
  line-height: 24px;
  text-align: center;
}
.ico-txt {
  font-family: "Liberation Sans", sans-serif;
  font-weight: 700;
}
.ico-txt--wide {
  letter-spacing: 6px;
}
.ico-serif {
  font-family: "Liberation Serif", serif;
}

/* right click menus */
.ctx {
  position: absolute;
  padding-top: 8px;
  font-size: 26px;
  line-height: 36px;
  white-space: nowrap;
  border-radius: 10px;
  box-shadow: 0 0 0 1px rgba(0,0,0,0.5), 0 6px 20px rgba(0,0,0,0.35);
}
.ctx--left {
  left: 2136px;
  top: 1390px;
  width: 340px;
  height: 306px;
  background:
    radial-gradient(ellipse at 10% 100%, rgba(255,255,255,0.2), transparent 60%),
    #453a63;
}
.ctx--right {
  left: 2477px;
  top: 1409px;
  width: 420px;
  height: 259px;
  padding-top: 10px;
  background:
    radial-gradient(ellipse at 30% 10%, rgba(255,255,255,0.08), transparent 60%),
    #3a3a3a;
}
.ctx-row {
  position: relative;
  height: 38px;
  padding-left: 43px;
}
.ctx--right .ctx-row {
  padding-left: 42px;
}
.ctx-row--on {
  background: #1668e0;
}
.ctx-row--off {
  color: #80788f;
}
.ctx-sep {
  height: 4px;
  border: 0;
  margin: 0;
  background: #5a5a5a;
}
.ctx-sep--left {
  margin: 12px 0 7px;
  background: #6a6080;
}
.ctx-sep--one {
  margin: 13px 0 8px;
}
.ctx-sep--two {
  margin: 12px 0 6px;
}
.ctx--right .ctx-row--win {
  height: 40px;
  padding-left: 81px;
}
.check {
  position: absolute;
  left: 7px;
  top: -2px;
  font-size: 32px;
  font-family: "DejaVu Sans", sans-serif;
}
.check--win {
  left: 9px;
}
.mini-win {
  position: absolute;
  left: 45px;
  top: 7px;
  width: 24px;
  height: 24px;
  border-radius: 2px;
  border-top: 6px solid #aaa;
  background: #fff;
}
.ctx-more {
  position: absolute;
  left: 349px;
  top: 9px;
  border-left: 17px solid #fff;
  border-top: 10px solid transparent;
  border-bottom: 10px solid transparent;
}
.ctx-tail {
  position: absolute;
  left: 2530px;
  top: 1668px;
  border-top: 24px solid #3a3a3a;
  border-left: 24px solid transparent;
  border-right: 24px solid transparent;
}

.red-frame {
  position: absolute;
  left: 2069px;
  top: 1345px;
  width: 806px;
  height: 450px;
  border: 18px solid #ff2600;
}
```
